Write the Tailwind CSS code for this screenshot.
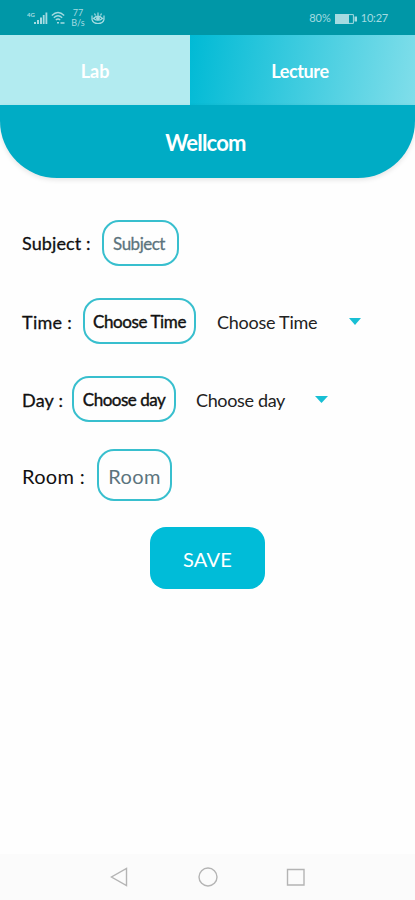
<!DOCTYPE html>
<html lang="en">
<head>
<meta charset="utf-8">
<title>Lecture</title>
<script src="https://cdn.jsdelivr.net/npm/@tailwindcss/browser@4"></script>
</head>
<body class="w-[415px] h-[900px] overflow-hidden bg-[#fefefe] font-['Lato',sans-serif] text-[#111] flex flex-col whitespace-nowrap">
<header class="h-[35px] shrink-0 bg-[#0097a7] flex items-center pl-[27px] pr-[27px] text-[#a5dbe1] text-[11px]">
  <svg class="w-[21px] h-[16px]" viewBox="0 0 21 16" fill="currentColor"><text x="0" y="7" font-size="6" font-weight="700">4G</text><path d="M7 12h2v2H7zM10 10h2v4h-2zM13 7.500h2V14h-2zM15.800 5h1.800v9h-1.800zM18.500 2.500h1.800V14h-1.800z"/></svg>
  <svg class="ml-[3px] w-[15px] h-[14px]" viewBox="0 0 15 14" fill="none" stroke="currentColor" stroke-width="1.300"><path d="M.8 4.500Q7-1.500 13.200 4.500M2.800 6.800Q7 2.800 11.200 6.800M4.800 9Q7 7 9.200 9"/><path d="M6 11.800h2M9.500 12h4" stroke-width="1.500"/></svg>
  <div class="ml-[4px] w-[16px] text-[9px] leading-[10px] text-center">77<br>B/s</div>
  <svg class="ml-[5px] w-[14px] h-[14px]" viewBox="0 0 14 14" fill="none" stroke="currentColor" stroke-width="1.200"><path d="M2.500 7.500Q7 3 11.500 7.500Q7 11 2.500 7.500ZM7 1.500v3M3.500 2.500l1 2M10.500 2.500l-1 2M1 4.500v4Q2 12.500 7 12.500T13 8.500v-4"/><circle cx="7" cy="7.300" r="1.300" fill="currentColor"/></svg>
  <div class="ml-auto flex items-center pt-[2px]">
    <span>80%</span>
    <svg class="ml-[4px] w-[23px] h-[10px]" viewBox="0 0 23 10" fill="currentColor"><path d="M0 0h14v10H0z"/><path d="M14 .6h4.400v8.800H14" fill="none" stroke="currentColor" stroke-width="1"/><path d="M19.500 2.500h2.500v5h-2.500z"/></svg>
    <span class="ml-[3px] tracking-[-0.2px]">10:27</span>
  </div>
</header>
<nav class="h-[70px] shrink-0 flex text-white font-bold text-[18px]">
  <div class="w-[190px] bg-[#b2ebf0] flex items-center justify-center pt-[2px]">Lab</div>
  <div class="w-[225px] bg-linear-[98deg,#00bad5,#80deea] flex items-center justify-center pt-[2px] pr-[5px]"><span class="tracking-[-0.4px]">Lecture</span></div>
</nav>
<section class="h-[73px] shrink-0 bg-[#00acc5] rounded-b-[57px] shadow-[0_2px_5px_rgba(0,0,0,0.1)] flex items-center justify-center text-white font-bold text-[22px] tracking-[-0.8px] pr-[4px] pt-[2px]">Wellcom</section>
<main class="grow pl-[22px] pt-[42px] flex flex-col text-[18px]">
  <div class="h-[46px] flex items-center">
    <label class="w-[80px] [-webkit-text-stroke:0.3px] pt-[1px] tracking-[0.1px]">Subject :</label>
    <div class="w-[77px] h-[46px] border-2 border-[#38bfce] rounded-[17px] flex items-center justify-center text-[#5c747d] text-[17px] tracking-[-0.5px] pr-[3px] pt-[2px] [-webkit-text-stroke:0.3px]">Subject</div>
  </div>
  <div class="mt-[32px] h-[46px] flex items-center">
    <label class="w-[61px] [-webkit-text-stroke:0.3px] pt-[2px] tracking-[0.3px]">Time :</label>
    <div class="w-[113px] h-[46px] border-2 border-[#38bfce] rounded-[17px] flex items-center justify-center text-[17px] tracking-[-0.4px] pt-[2px] [-webkit-text-stroke:0.4px]">Choose Time</div>
    <span class="ml-[21px] w-[132px] pt-[2px] text-[#222] tracking-[-0.25px]">Choose Time</span>
    <svg class="w-[12px] h-[7px]" viewBox="0 0 12 7"><path d="M0 0h12L6 7z" fill="#18bfd4"/></svg>
  </div>
  <div class="mt-[32px] h-[46px] flex items-center">
    <label class="w-[50px] [-webkit-text-stroke:0.3px] pt-[2px] tracking-[0.2px]">Day :</label>
    <div class="w-[104px] h-[46px] border-2 border-[#38bfce] rounded-[17px] flex items-center justify-center text-[17px] tracking-[-0.5px] pt-[2px] [-webkit-text-stroke:0.4px]">Choose day</div>
    <span class="ml-[20px] w-[119px] pt-[2px] text-[#222] tracking-[-0.35px]">Choose day</span>
    <svg class="w-[13px] h-[7px]" viewBox="0 0 12 7" preserveAspectRatio="none"><path d="M0 0h12L6 7z" fill="#18bfd4"/></svg>
  </div>
  <div class="mt-[27px] h-[52px] flex items-center">
    <label class="w-[75px] text-[20px] pt-[1px] tracking-[0.3px]">Room :</label>
    <div class="w-[75px] h-[52px] border-2 border-[#38bfce] rounded-[17px] flex items-center justify-center text-[#5c747d] text-[20px] tracking-[0.4px] pt-[1px]">Room</div>
  </div>
  <button class="mt-[26px] ml-[128px] w-[115px] h-[62px] bg-[#00bcd8] rounded-[16px] text-white text-[20px] tracking-[0.2px] pt-[1px]">SAVE</button>
</main>
<footer class="h-[46px] shrink-0 bg-[#fbfbfb] text-[#b4b4b4]">
  <svg class="w-[415px] h-[46px]" viewBox="0 0 415 46" fill="none" stroke="currentColor" stroke-width="1.400"><path d="M126.500 14.500v17L111.500 23zM287.500 15.500h16.500v15.500h-16.500z"/><circle cx="208" cy="23" r="9"/></svg>
</footer>
</body>
</html>
